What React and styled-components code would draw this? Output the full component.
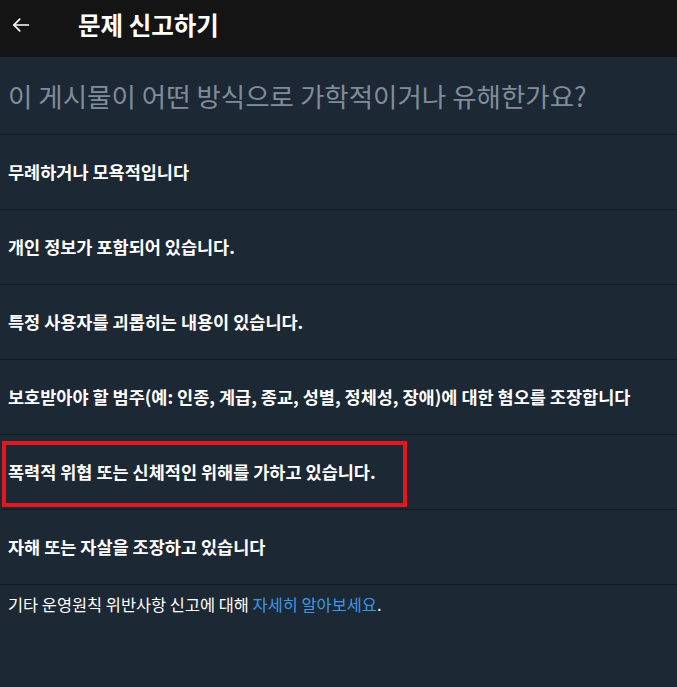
import React from "react"
import styled, { createGlobalStyle } from "styled-components"

const GlobalStyle = createGlobalStyle`
  html, body {
    margin: 0;
    padding: 0;
    background: #1d2835;
  }
  body {
    font-family: "Noto Sans CJK KR", "Noto Sans", sans-serif;
  }
`

const reasons = [
  { text: "무례하거나 모욕적입니다" },
  { text: "개인 정보가 포함되어 있습니다." },
  { text: "특정 사용자를 괴롭히는 내용이 있습니다." },
  { text: "보호받아야 할 범주(예: 인종, 계급, 종교, 성별, 정체성, 장애)에 대한 혐오를 조장합니다" },
  { text: "폭력적 위협 또는 신체적인 위해를 가하고 있습니다.", marked: true },
  { text: "자해 또는 자살을 조장하고 있습니다" },
]

const App = () => (
  <Page>
    <GlobalStyle />
    <Header>
      <BackButton aria-label="뒤로">
        <svg width="20" height="20" viewBox="0 0 24 24" fill="none" stroke="#ffffff" strokeWidth="2" strokeLinecap="round" strokeLinejoin="round">
          <path d="M21 12H3.5" />
          <path d="M10.5 5l-7 7 7 7" />
        </svg>
      </BackButton>
      <Title>문제 신고하기</Title>
    </Header>
    <Question>이 게시물이 어떤 방식으로 가학적이거나 유해한가요?</Question>
    <List>
      {reasons.map((r) => (
        <Row key={r.text}>
          <RowText>{r.text}</RowText>
          {r.marked && <Highlight />}
        </Row>
      ))}
    </List>
    <Footer>
      기타 운영원칙 위반사항 신고에 대해 <Link href="#">자세히 알아보세요</Link>.
    </Footer>
  </Page>
)

export default App

const Page = styled.div`
  min-height: 687px;
  background: #1d2835;
  color: #ffffff;
`

const Header = styled.div`
  height: 57px;
  background: #141414;
  display: flex;
  align-items: center;
  padding: 0 11px 8px;
  box-sizing: border-box;
`

const BackButton = styled.div`
  width: 20px;
  height: 20px;
  display: flex;
  align-items: center;
  justify-content: center;
  margin-right: 47px;
`

const Title = styled.h1`
  margin: 0;
  font-size: 24.5px;
  font-weight: 700;
  color: #ffffff;
`

const Question = styled.h2`
  margin: 0;
  height: 77px;
  display: flex;
  align-items: center;
  padding: 0 8px;
  font-size: 26.5px;
  font-weight: 400;
  color: #7f8d9b;
  border-bottom: 1px solid #121a22;
`

const List = styled.div`
  display: flex;
  flex-direction: column;
`

const Row = styled.div`
  position: relative;
  height: 72px;
  display: flex;
  align-items: center;
  padding: 0 8px 2px;
  border-bottom: 1px solid #121a22;
`

const RowText = styled.span`
  font-size: 17.5px;
  font-weight: 700;
  color: #ffffff;
  white-space: nowrap;
`

const Highlight = styled.div`
  position: absolute;
  left: 2px;
  top: 6px;
  width: 405px;
  height: 66px;
  border: 4px solid #e3171f;
  box-sizing: border-box;
  pointer-events: none;
`

const Footer = styled.p`
  margin: 0;
  padding: 9px 8px;
  font-size: 16.4px;
  line-height: 20px;
  color: #ffffff;
`

const Link = styled.a`
  color: #3b98e6;
  text-decoration: none;
`
